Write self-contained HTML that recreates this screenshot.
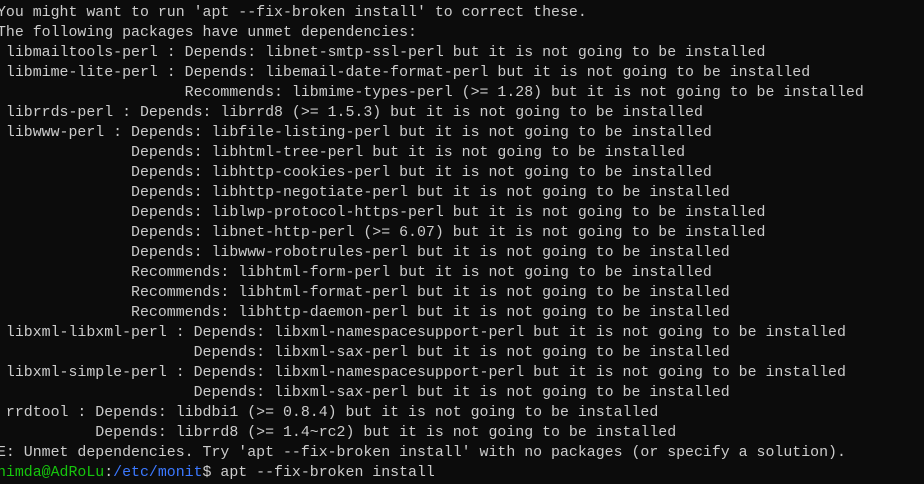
<!DOCTYPE html>
<html><head><meta charset="utf-8"><style>
html,body{margin:0;padding:0;background:#0c0c0c;width:924px;height:484px;overflow:hidden}
pre{margin:0;position:absolute;left:-3px;top:3px;font-family:"Liberation Mono",monospace;font-size:14.9px;line-height:20px;color:#cccccc;white-space:pre}
.g{color:#16c60c}.b{color:#3b78ff}
</style></head><body><pre>You might want to run 'apt --fix-broken install' to correct these.
The following packages have unmet dependencies:
 libmailtools-perl : Depends: libnet-smtp-ssl-perl but it is not going to be installed
 libmime-lite-perl : Depends: libemail-date-format-perl but it is not going to be installed
                     Recommends: libmime-types-perl (>= 1.28) but it is not going to be installed
 librrds-perl : Depends: librrd8 (>= 1.5.3) but it is not going to be installed
 libwww-perl : Depends: libfile-listing-perl but it is not going to be installed
               Depends: libhtml-tree-perl but it is not going to be installed
               Depends: libhttp-cookies-perl but it is not going to be installed
               Depends: libhttp-negotiate-perl but it is not going to be installed
               Depends: liblwp-protocol-https-perl but it is not going to be installed
               Depends: libnet-http-perl (>= 6.07) but it is not going to be installed
               Depends: libwww-robotrules-perl but it is not going to be installed
               Recommends: libhtml-form-perl but it is not going to be installed
               Recommends: libhtml-format-perl but it is not going to be installed
               Recommends: libhttp-daemon-perl but it is not going to be installed
 libxml-libxml-perl : Depends: libxml-namespacesupport-perl but it is not going to be installed
                      Depends: libxml-sax-perl but it is not going to be installed
 libxml-simple-perl : Depends: libxml-namespacesupport-perl but it is not going to be installed
                      Depends: libxml-sax-perl but it is not going to be installed
 rrdtool : Depends: libdbi1 (>= 0.8.4) but it is not going to be installed
           Depends: librrd8 (>= 1.4~rc2) but it is not going to be installed
E: Unmet dependencies. Try 'apt --fix-broken install' with no packages (or specify a solution).
<span class="g">nimda@AdRoLu</span>:<span class="b">/etc/monit</span>$ apt --fix-broken install</pre></body></html>
